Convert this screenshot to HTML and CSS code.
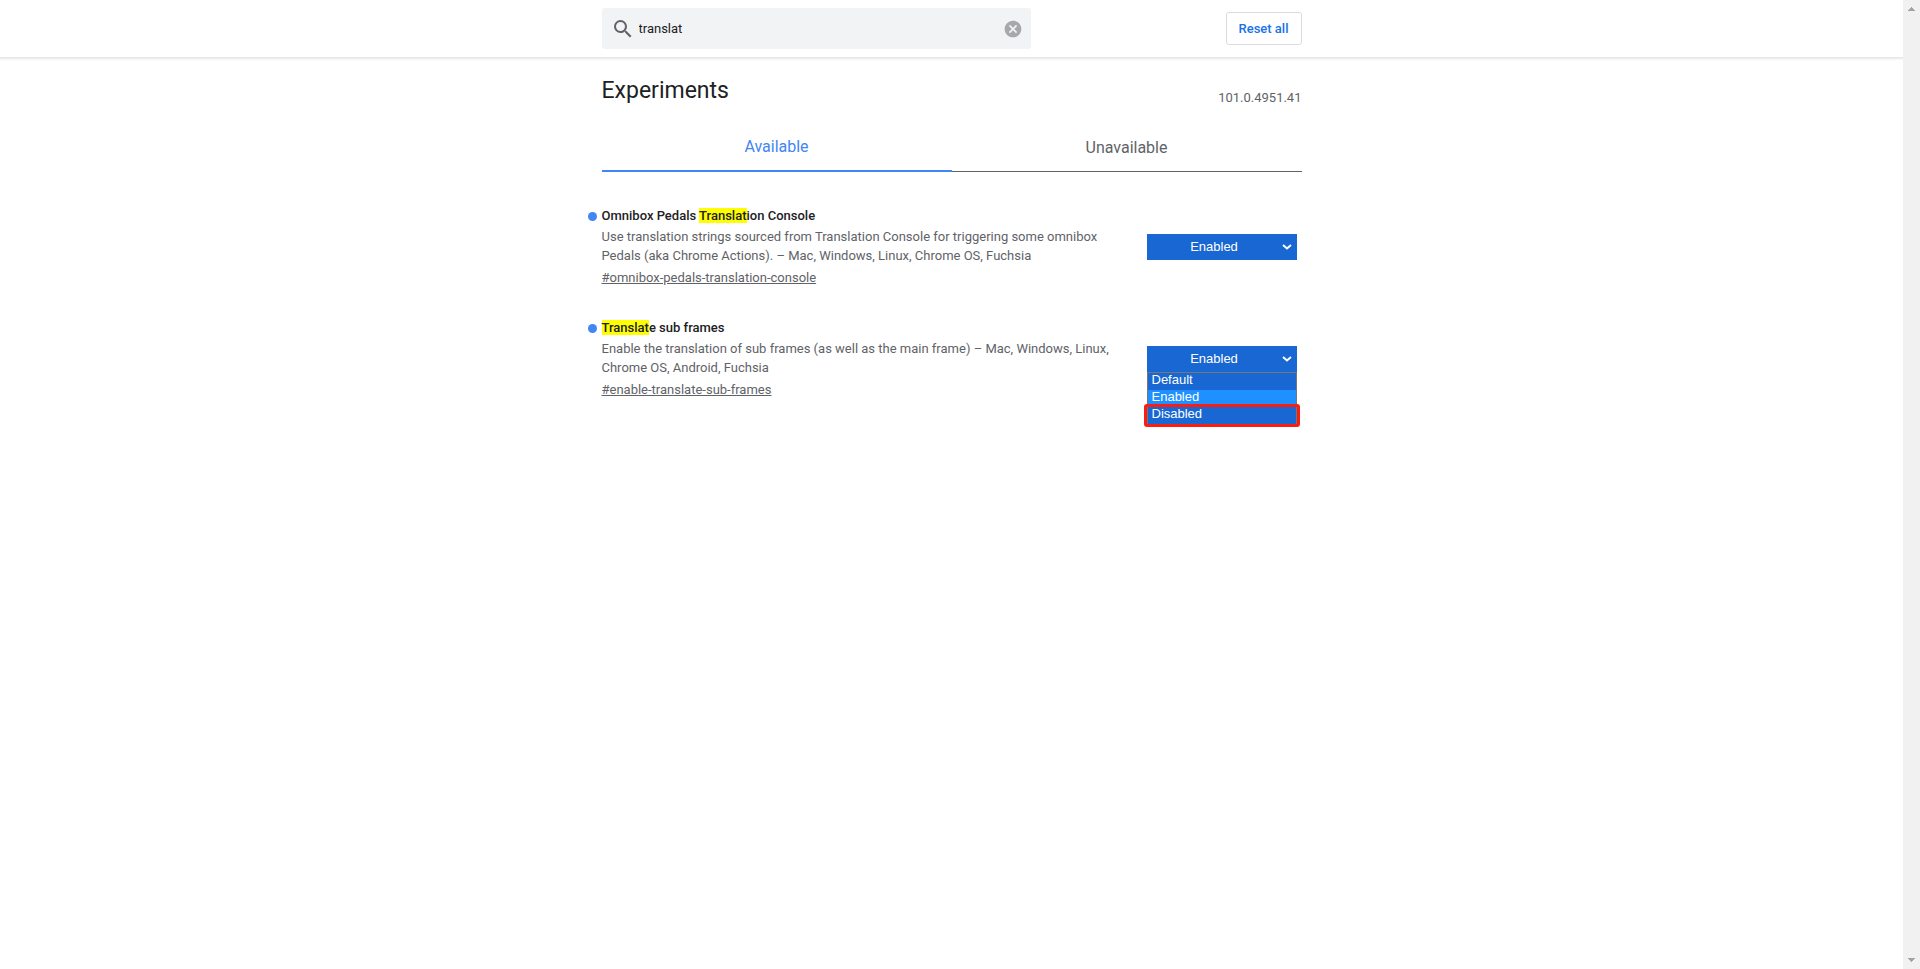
FILE: index.html
```html
<!DOCTYPE html>
<html lang="en">
<head>
<meta charset="utf-8">
<title>Experiments</title>
<link rel="stylesheet" href="styles.css">
</head>
<body>
<div class="page">
  <header class="header">
    <div class="header-inner">
      <div class="search">
        <svg class="search-icon" viewBox="0 0 24 24" aria-hidden="true"><path d="M15.5 14h-.79l-.28-.27A6.471 6.471 0 0 0 16 9.5 6.5 6.5 0 1 0 9.5 16c1.61 0 3.09-.59 4.23-1.57l.27.28v.79l5 4.99L20.49 19l-4.99-5zm-6 0C7.01 14 5 11.99 5 9.5S7.01 5 9.5 5 14 7.01 14 9.5 11.99 14 9.5 14z"/></svg>
        <input class="search-input" type="text" value="translat" aria-label="Search flags">
        <button class="clear" type="button" aria-label="Clear search">
          <svg class="clear-icon" viewBox="0 0 24 24" aria-hidden="true"><path d="M12 2C6.47 2 2 6.47 2 12s4.47 10 10 10 10-4.47 10-10S17.53 2 12 2zm5 13.59L15.59 17 12 13.41 8.41 17 7 15.59 10.59 12 7 8.41 8.41 7 12 10.59 15.59 7 17 8.41 13.41 12 17 15.59z"/></svg>
        </button>
      </div>
      <button class="reset" type="button">Reset all</button>
    </div>
  </header>
  <main class="content">
    <div class="title-row">
      <h1 class="title">Experiments</h1>
      <span class="version">101.0.4951.41</span>
    </div>
    <div class="tabs" role="tablist">
      <button class="tab tab-selected" type="button" role="tab" aria-selected="true">Available</button>
      <button class="tab" type="button" role="tab" aria-selected="false">Unavailable</button>
    </div>
    <section class="experiment">
      <div class="details">
        <h2 class="name">Omnibox Pedals <mark class="match">Translat</mark>ion Console</h2>
        <p class="description">Use translation strings sourced from Translation Console for triggering some omnibox Pedals (aka Chrome Actions). – Mac, Windows, Linux, Chrome OS, Fuchsia</p>
        <a class="permalink" href="#omnibox-pedals-translation-console">#omnibox-pedals-translation-console</a>
      </div>
      <div class="control">
        <select class="choice" aria-label="Omnibox Pedals Translation Console">
          <option>Default</option><option selected>Enabled</option><option>Disabled</option>
        </select>
        <svg class="chevron" viewBox="0 0 10 6" aria-hidden="true"><path d="M1 1l4 3.5L9 1"/></svg>
      </div>
    </section>
    <section class="experiment">
      <div class="details">
        <h2 class="name"><mark class="match">Translat</mark>e sub frames</h2>
        <p class="description">Enable the translation of sub frames (as well as the main frame) – Mac, Windows, Linux, Chrome OS, Android, Fuchsia</p>
        <a class="permalink" href="#enable-translate-sub-frames">#enable-translate-sub-frames</a>
      </div>
      <div class="control">
        <select class="choice" aria-label="Translate sub frames">
          <option>Default</option><option selected>Enabled</option><option>Disabled</option>
        </select>
        <svg class="chevron" viewBox="0 0 10 6" aria-hidden="true"><path d="M1 1l4 3.5L9 1"/></svg>
        <ul class="menu" role="listbox" aria-label="Translate sub frames options">
          <li class="menu-item" role="option">Default</li>
          <li class="menu-item menu-item-active" role="option" aria-selected="true">Enabled</li>
          <li class="menu-item" role="option">Disabled</li>
        </ul>
        <div class="callout"></div>
      </div>
    </section>
  </main>
</div>
<div class="scrollbar" aria-hidden="true">
  <svg class="scroll-arrow" viewBox="0 0 7 4" shape-rendering="crispEdges"><path d="M3 0h1v1h1v1h1v1h1v1H0V3h1V2h1V1h1z"/></svg>
  <svg class="scroll-arrow" viewBox="0 0 7 4" shape-rendering="crispEdges"><path d="M0 0h7v1H6v1H5v1H4v1H3V3H2V2H1V1H0z"/></svg>
</div>
</body>
</html>
```

FILE: styles.css
```css
* { box-sizing: border-box; }
body {
  margin: 0;
  min-height: 100vh;
  display: flex;
  background: #fff;
  color: #202124;
  font: 13px/19px Roboto, "Liberation Sans", sans-serif;
}
button, input, select { font: inherit; margin: 0; }
.page { flex: 1; min-width: 0; }
.header {
  padding: 8px 16px;
  background: #fff;
  box-shadow: 0 1px 2px 1px rgba(0, 0, 0, .1);
}
.header-inner {
  display: flex;
  align-items: center;
  justify-content: space-between;
  max-width: 700px;
  margin: 0 auto;
}
.search {
  display: flex;
  align-items: center;
  width: 429px;
  height: 41px;
  padding: 0 6px 0 9px;
  border-radius: 3px;
  background: #f1f3f4;
}
.search-icon { width: 24px; height: 24px; fill: #5f6368; }
.search-input {
  flex: 1;
  min-width: 0;
  padding: 0 4px;
  border: 0;
  outline: 0;
  background: none;
  color: #202124;
}
.clear {
  display: flex;
  padding: 2px;
  border: 0;
  background: none;
}
.clear-icon { width: 20px; height: 20px; fill: #a5a9ac; }
.reset {
  height: 33px;
  padding: 0 12px;
  border: 1px solid #dadce0;
  border-radius: 3px;
  background: #fff;
  color: #1a73e8;
  font-weight: 500;
}
.content {
  max-width: 700px;
  margin: 0 auto;
}
.title-row {
  display: flex;
  align-items: flex-end;
  justify-content: space-between;
  padding-top: 19px;
}
.title { margin: 0 0 1px; font-size: 23px; line-height: 29px; font-weight: 400; }
.version { color: #5f6368; line-height: 17px; }
.tabs { display: flex; margin: 17px 0 3px; }
.tab {
  flex: 1;
  height: 49px;
  padding: 0;
  border: 0;
  border-bottom: 1px solid #5f6368;
  background: none;
  color: #5f6368;
  font-size: 16px;
}
.tab-selected {
  padding-bottom: 1px;
  border-bottom: 2px solid #4285f4;
  color: #4285f4;
}
.experiment {
  display: flex;
  justify-content: space-between;
  padding-top: 31px;
}
.details { flex: 0 1 524px; }
.name {
  position: relative;
  margin: 0;
  font-size: 13px;
  line-height: 19px;
  font-weight: 500;
}
.name::before {
  content: "";
  position: absolute;
  left: -14px;
  top: 6px;
  width: 9px;
  height: 9px;
  border-radius: 50%;
  background: #4285f4;
}
.match { background: #ff0; color: inherit; }
.description { margin: 2px 0 3px; color: #5f6368; }
.permalink { display: block; color: #5f6368; }
.control {
  position: relative;
  width: 150px;
  height: 26px;
  margin: 28px 5px 0 0;
}
.choice {
  appearance: none;
  display: block;
  width: 100%;
  height: 26px;
  padding: 0 15px 1px 0;
  border: 0;
  border-radius: 0;
  background: #1967d2;
  color: #fff;
  font-family: "Liberation Sans", Arial, sans-serif;
  text-align: center;
  text-align-last: center;
}
.chevron {
  position: absolute;
  right: 5px;
  top: 10px;
  width: 10px;
  height: 6px;
  fill: none;
  stroke: #fff;
  stroke-width: 2;
  pointer-events: none;
}
.menu {
  position: absolute;
  left: 0;
  right: 0;
  top: 26px;
  margin: 0;
  padding: 0;
  border: 1px solid #767676;
  background: #1967d2;
  color: #fff;
  font: 13px/14px "Liberation Sans", Arial, sans-serif;
  list-style: none;
}
.menu-item { padding: 0 4px 3px; }
.menu-item-active { background: #1e90ff; }
.callout {
  position: absolute;
  left: -3px;
  right: -3px;
  top: 58px;
  height: 23px;
  border: 3px solid #fb1d10;
  border-radius: 3px;
}
.scrollbar {
  display: flex;
  flex-direction: column;
  justify-content: space-between;
  align-items: center;
  width: 17px;
  padding: 7px 0;
  background: #f1f1f1;
}
.scroll-arrow { width: 7px; height: 4px; fill: #a3a3a3; }
```
